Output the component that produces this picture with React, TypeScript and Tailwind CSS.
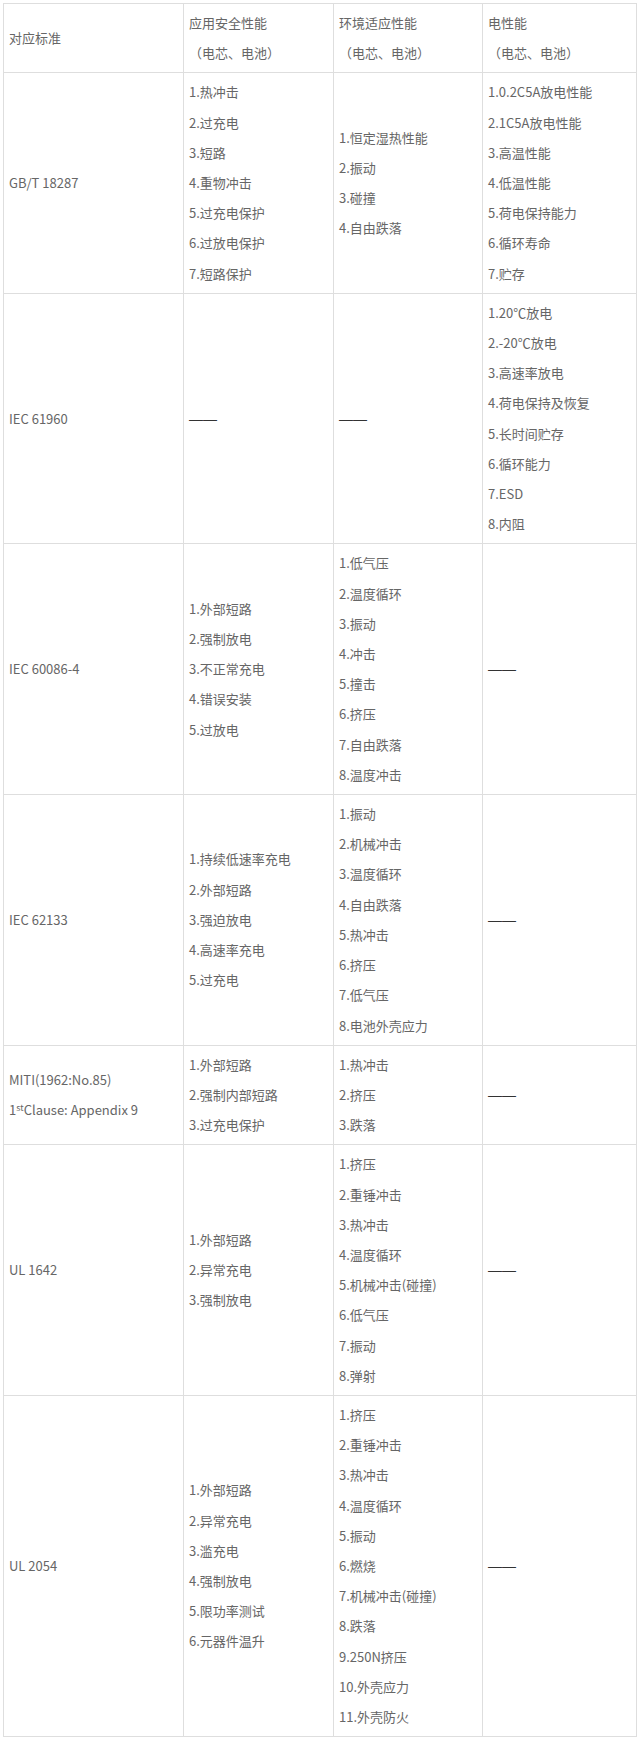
const rows: { std: React.ReactNode; safety: string[]; env: string[]; elec: string[] }[] = [
  {
    std: "GB/T 18287",
    safety: ["1.热冲击", "2.过充电", "3.短路", "4.重物冲击", "5.过充电保护", "6.过放电保护", "7.短路保护"],
    env: ["1.恒定湿热性能", "2.振动", "3.碰撞", "4.自由跌落"],
    elec: ["1.0.2C5A放电性能", "2.1C5A放电性能", "3.高温性能", "4.低温性能", "5.荷电保持能力", "6.循环寿命", "7.贮存"],
  },
  {
    std: "IEC 61960",
    safety: [],
    env: [],
    elec: ["1.20℃放电", "2.-20℃放电", "3.高速率放电", "4.荷电保持及恢复", "5.长时间贮存", "6.循环能力", "7.ESD", "8.内阻"],
  },
  {
    std: "IEC 60086-4",
    safety: ["1.外部短路", "2.强制放电", "3.不正常充电", "4.错误安装", "5.过放电"],
    env: ["1.低气压", "2.温度循环", "3.振动", "4.冲击", "5.撞击", "6.挤压", "7.自由跌落", "8.温度冲击"],
    elec: [],
  },
  {
    std: "IEC 62133",
    safety: ["1.持续低速率充电", "2.外部短路", "3.强迫放电", "4.高速率充电", "5.过充电"],
    env: ["1.振动", "2.机械冲击", "3.温度循环", "4.自由跌落", "5.热冲击", "6.挤压", "7.低气压", "8.电池外壳应力"],
    elec: [],
  },
  {
    std: (
      <>
        <p>MITI(1962:No.85)</p>
        <p>
          1<sup className="text-[9px]">st</sup>Clause: Appendix 9
        </p>
      </>
    ),
    safety: ["1.外部短路", "2.强制内部短路", "3.过充电保护"],
    env: ["1.热冲击", "2.挤压", "3.跌落"],
    elec: [],
  },
  {
    std: "UL 1642",
    safety: ["1.外部短路", "2.异常充电", "3.强制放电"],
    env: ["1.挤压", "2.重锤冲击", "3.热冲击", "4.温度循环", "5.机械冲击(碰撞)", "6.低气压", "7.振动", "8.弹射"],
    elec: [],
  },
  {
    std: "UL 2054",
    safety: ["1.外部短路", "2.异常充电", "3.滥充电", "4.强制放电", "5.限功率测试", "6.元器件温升"],
    env: ["1.挤压", "2.重锤冲击", "3.热冲击", "4.温度循环", "5.振动", "6.燃烧", "7.机械冲击(碰撞)", "8.跌落", "9.250N挤压", "10.外壳应力", "11.外壳防火"],
    elec: [],
  },
];

const cell = "border border-[#dedede] align-middle px-[5px] py-1 text-left font-normal";

function Items({ list }: { list: string[] }) {
  // empty cells show a long dash
  if (list.length === 0)
    return <p className="font-['Liberation_Sans',sans-serif] text-[14px] text-[#333]">——</p>;
  return (
    <>
      {list.map((t, i) => (
        <p key={i} className="whitespace-nowrap">{t}</p>
      ))}
    </>
  );
}

export default function App() {
  return (
    <div className="bg-white pt-[3px] pl-[3px] pr-[4px] pb-[4px] font-['Noto_Sans_CJK_SC',sans-serif] text-[13px] leading-[30.2px] text-[#666]">
      <table className="w-[633px] table-fixed border-collapse">
        <colgroup>
          <col className="w-[180px]" />
          <col className="w-[150px]" />
          <col className="w-[149px]" />
          <col className="w-[154px]" />
        </colgroup>
        <thead>
          <tr>
            <th className={cell}>对应标准</th>
            <th className={cell}>
              <p>应用安全性能</p>
              <p>（电芯、电池）</p>
            </th>
            <th className={cell}>
              <p>环境适应性能</p>
              <p>（电芯、电池）</p>
            </th>
            <th className={cell}>
              <p>电性能</p>
              <p>（电芯、电池）</p>
            </th>
          </tr>
        </thead>
        <tbody>
          {rows.map((r, i) => (
            <tr key={i}>
              <td className={cell}>{r.std}</td>
              <td className={cell}>
                <Items list={r.safety} />
              </td>
              <td className={cell}>
                <Items list={r.env} />
              </td>
              <td className={cell}>
                <Items list={r.elec} />
              </td>
            </tr>
          ))}
        </tbody>
      </table>
    </div>
  );
}
